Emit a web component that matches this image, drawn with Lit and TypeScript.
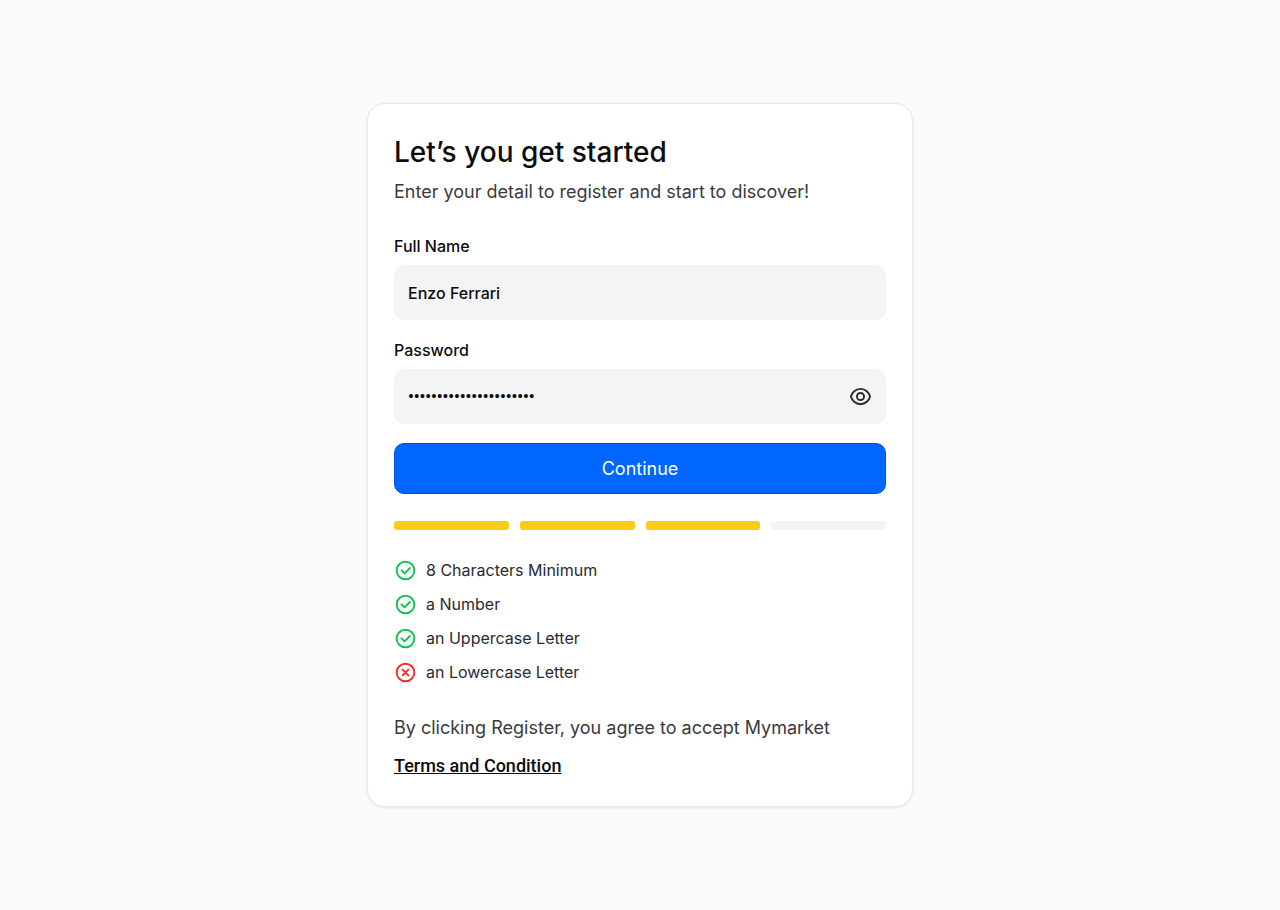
import { LitElement, html, css, svg } from "lit";
import { customElement, state } from "lit/decorators.js";

interface Rule { text: string; met: boolean; }

@customElement("app-root")
export class AppRoot extends LitElement {
  @state() private revealed = false;
  @state() private rules: Rule[] = [
    { text: "8 Characters Minimum", met: true },
    { text: "a Number", met: true },
    { text: "an Uppercase Letter", met: true },
    { text: "an Lowercase Letter", met: false },
  ];

  static styles = css`
    :host {
      display: grid;
      place-items: center;
      min-height: 100vh;
      box-sizing: border-box;
      padding: 24px;
      background: #fafafa;
      color: #0c0c0d;
      font-family: Inter, sans-serif;
      font-size: 16px;
      line-height: 20px;
    }
    * { box-sizing: border-box; }
    .card {
      width: 100%;
      max-width: 546px;
      padding: 28px 26px 21px;
      background: #fff;
      border: 1px solid #e8e8e8;
      border-radius: 18px;
      box-shadow: 0 1px 3px rgba(0, 0, 0, 0.08);
    }
    .title { margin: 0; font-size: 28px; line-height: 40px; font-weight: 500; }
    .lead { margin: 6px 0 0; font-size: 18px; line-height: 28px; color: #3a3a40; }
    .form { margin-top: 30px; display: flex; flex-direction: column; gap: 19px; }
    .fields { display: flex; flex-direction: column; gap: 20px; }
    .field { display: flex; flex-direction: column; gap: 9px; }
    .label { font-weight: 500; }
    .box { display: flex; align-items: center; height: 55px; background: #f4f4f4; border-radius: 10px; padding-right: 14px; }
    .input {
      flex: 1; min-width: 0; height: 100%; padding: 0 14px; border: 0; background: none;
      font: inherit; font-weight: 500; color: inherit; outline: none;
    }
    .input[type="password"] { font-family: Roboto, sans-serif; font-weight: 700; }
    .eye { display: flex; padding: 0; border: 0; background: none; color: #2a2a30; cursor: pointer; }
    .submit {
      height: 51px; border: 1px solid #0050d8; border-radius: 10px; background: #0066ff;
      color: #fff; font: inherit; font-size: 18px; cursor: pointer;
    }
    .meter { display: grid; grid-template-columns: repeat(4, 1fr); gap: 11px; margin-top: 27px; }
    .bar { height: 9px; border-radius: 3px; background: #f4f4f4; }
    .bar.on { background: #facc15; }
    .rules { list-style: none; margin: 28px 0 0; padding: 0; display: flex; flex-direction: column; gap: 10px; }
    .rule { display: flex; align-items: center; gap: 9px; line-height: 24px; color: #2a2a30; }
    .icon { display: block; flex: none; fill: none; stroke: currentColor; stroke-linecap: round; stroke-linejoin: round; }
    .ok { color: #17bf50; }
    .bad { color: #ee2e2a; }
    .legal { margin: 25px 0 0; font-size: 18px; line-height: 38px; color: #3a3a40; }
    .link { display: block; width: fit-content; color: #0c0c0d; font-family: Roboto, sans-serif; font-weight: 500; }
  `;

  private ruleIcon(met: boolean) {
    return html`<svg class="icon ${met ? "ok" : "bad"}" width="23" height="23" viewBox="0 0 24 24" stroke-width="2" aria-hidden="true">
      <circle cx="12" cy="12" r="9.2"></circle>
      ${met ? svg`<path d="M7.800 11.800l3.200 3.200l5.600-5.600"></path>` : svg`<path d="M9 9l6 6M15 9l-6 6"></path>`}
    </svg>`;
  }

  render() {
    const met = this.rules.filter((r) => r.met).length;
    return html`
      <main class="card">
        <h1 class="title">Let’s you get started</h1>
        <p class="lead">Enter your detail to register and start to discover!</p>
        <form class="form" @submit=${(e: Event) => e.preventDefault()}>
          <div class="fields">
            <div class="field">
              <label class="label" for="name">Full Name</label>
              <div class="box"><input class="input" id="name" type="text" value="Enzo Ferrari" /></div>
            </div>
            <div class="field">
              <label class="label" for="password">Password</label>
              <div class="box">
                <input class="input" id="password" type=${this.revealed ? "text" : "password"} value="EnzoFerrari1947Modena1" />
                <button class="eye" type="button" aria-label="Show password" @click=${() => (this.revealed = !this.revealed)}>
                  <svg class="icon" width="23" height="23" viewBox="0 0 24 24" stroke-width="2" aria-hidden="true">
                    <path d="M2 12C3 8 6.800 4 12 4s9 4 10 8c-1 4-4.800 8-10 8S3 16 2 12z"></path>
                    <circle cx="12" cy="12" r="3.700"></circle>
                  </svg>
                </button>
              </div>
            </div>
          </div>
          <button class="submit" type="submit">Continue</button>
        </form>
        <div class="meter" role="img" aria-label="Password strength">
          ${this.rules.map((_, i) => html`<span class="bar ${i < met ? "on" : ""}"></span>`)}
        </div>
        <ul class="rules">
          ${this.rules.map((r) => html`<li class="rule">${this.ruleIcon(r.met)}<span>${r.text}</span></li>`)}
        </ul>
        <p class="legal">By clicking Register, you agree to accept Mymarket <a class="link" href="#">Terms and Condition</a></p>
      </main>
    `;
  }
}
